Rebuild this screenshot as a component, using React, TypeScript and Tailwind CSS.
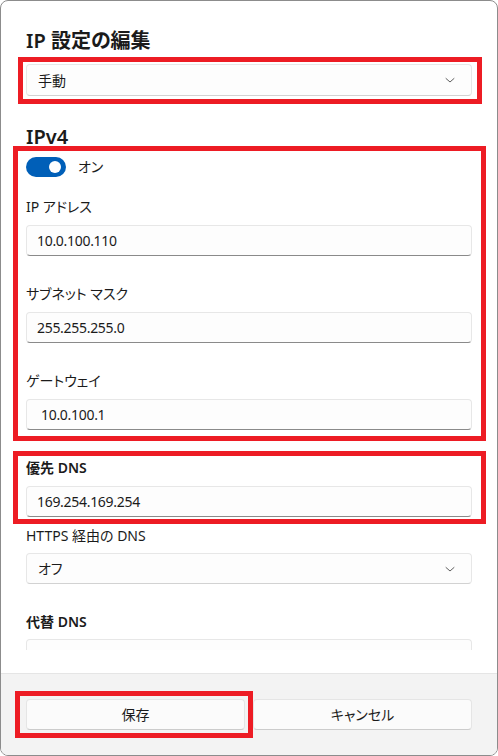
import React from "react";

const font = {
  fontFamily: '"Segoe UI", "Noto Sans", "Noto Sans CJK JP", sans-serif',
  fontFeatureSettings: '"palt"',
};

function Chevron() {
  return (
    <svg width="10" height="10" viewBox="0 0 10 10" fill="none" className="absolute right-[16px] top-1/2 -translate-y-1/2">
      <path d="M1 3.5 L5 7 L9 3.5" stroke="#5f5f5f" strokeWidth="1" strokeLinecap="round" strokeLinejoin="round" />
    </svg>
  );
}

function Combo({ value, tall }: { value: string; tall?: boolean }) {
  return (
    <div
      className={`relative flex items-center ${tall ? "h-8" : "h-[31px]"} pl-[11px] rounded-[4px] bg-[#fdfdfd] border border-[#e7e7e7] border-b-[#d2d2d2] text-[14px] text-[#1b1b1b]`}
    >
      {value}
      <Chevron />
    </div>
  );
}

function TextBox({ value, indent }: { value?: string; indent?: boolean }) {
  return (
    <div
      className={`flex items-center h-[31px] ${indent ? "pl-[14px]" : "pl-[10px]"} rounded-[4px] bg-[#fdfdfd] border border-[#e7e7e7] border-b-[#8a8a8a] text-[14px] tracking-[-0.3px] text-[#1b1b1b]`}
    >
      {value}
    </div>
  );
}

function Label({ children, bold, className = "" }: { children: React.ReactNode; bold?: boolean; className?: string }) {
  return (
    <div className={`h-5 leading-5 text-[14px] text-[#1b1b1b] ${bold ? "font-semibold" : ""} ${className}`}>
      {children}
    </div>
  );
}

function Mark({ className }: { className: string }) {
  return <div className={`absolute border-[5px] border-[#ed1c24] pointer-events-none ${className}`} />;
}

export default function App() {
  return (
    <div className="relative w-[498px] h-[756px] bg-white" style={font}>
      <div className="w-full h-full flex flex-col bg-white border border-[#8c8c8c] rounded-lg overflow-hidden">
        <div className="h-[649px] overflow-hidden px-[25px] pt-[26px] shrink-0">
          <h1 className="h-7 leading-7 text-[20px] font-semibold text-[#1b1b1b]">IP 設定の編集</h1>
          <div className="mt-[9px]">
            <Combo value="手動" tall />
          </div>

          <h2 className="mt-[27px] h-7 leading-7 text-[20px] font-semibold text-[#1b1b1b]">IPv4</h2>
          <div className="mt-[5px] flex items-center">
            <div className="relative w-10 h-5 rounded-full bg-[#005fb8]">
              <div className="absolute right-[5px] top-1/2 -translate-y-1/2 w-3 h-3 rounded-full bg-white" />
            </div>
            <span className="ml-3 text-[14px] text-[#1b1b1b]">オン</span>
          </div>

          <Label className="mt-5">IP アドレス</Label>
          <div className="mt-2"><TextBox value="10.0.100.110" /></div>

          <Label className="mt-7">サブネット マスク</Label>
          <div className="mt-2"><TextBox value="255.255.255.0" /></div>

          <Label className="mt-7">ゲートウェイ</Label>
          <div className="mt-2"><TextBox value="10.0.100.1" indent /></div>

          <Label bold className="mt-7">優先 DNS</Label>
          <div className="mt-2"><TextBox value="169.254.169.254" /></div>

          <Label className="mt-[9px]">HTTPS 経由の DNS</Label>
          <div className="mt-[7px]"><Combo value="オフ" /></div>

          <Label bold className="mt-7">代替 DNS</Label>
          <div className="mt-[7px]"><TextBox /></div>
        </div>

        <div className="flex-1" />

        <div className="h-[82px] shrink-0 bg-[#f3f3f3] border-t border-[#e5e5e5] px-[25px] pt-[25px] flex gap-2">
          <button className="flex-1 h-[31px] rounded-[4px] bg-[#fbfbfb] border border-[#e5e5e5] border-b-[#cccccc] text-[14px] text-[#1b1b1b]">
            保存
          </button>
          <button className="flex-1 h-[31px] rounded-[4px] bg-[#fbfbfb] border border-[#e5e5e5] border-b-[#cccccc] text-[14px] text-[#1b1b1b]">
            キャンセル
          </button>
        </div>
      </div>

      <Mark className="left-[18px] top-[57px] w-[464px] h-[47px]" />
      <Mark className="left-[13px] top-[146px] w-[473px] h-[295px]" />
      <Mark className="left-[13px] top-[451px] w-[473px] h-[73px]" />
      <Mark className="left-[15px] top-[691px] w-[238px] h-[47px]" />
    </div>
  );
}
